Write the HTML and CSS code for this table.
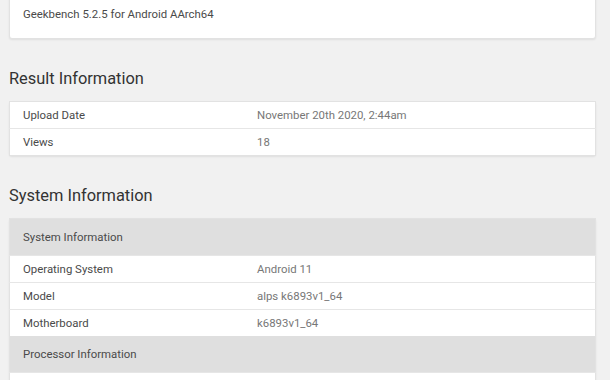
FILE: index.html
```html
<!DOCTYPE html>
<html lang="en">
<head>
<meta charset="UTF-8">
<meta name="viewport" content="width=device-width, initial-scale=1.0">
<title>Geekbench Browser</title>
<link rel="stylesheet" href="styles.css">
</head>
<body>
<div class="page">
  <!-- Benchmark version card -->
  <div class="card version-card">Geekbench 5.2.5 for Android AArch64</div>

  <h2 class="section-title result-title">Result Information</h2>
  <table class="card info-table">
    <tr><td class="name">Upload Date</td><td class="value">November 20th 2020, 2:44am</td></tr>
    <tr><td class="name">Views</td><td class="value">18</td></tr>
  </table>

  <h2 class="section-title system-title">System Information</h2>
  <table class="card info-table">
    <tr class="group"><th colspan="2">System Information</th></tr>
    <tr><td class="name">Operating System</td><td class="value">Android 11</td></tr>
    <tr><td class="name">Model</td><td class="value">alps k6893v1_64</td></tr>
    <tr><td class="name">Motherboard</td><td class="value">k6893v1_64</td></tr>
    <tr class="group"><th colspan="2">Processor Information</th></tr>
    <tr><td class="name"></td><td class="value"></td></tr>
  </table>
</div>
</body>
</html>
```

FILE: styles.css
```css
body {
margin: 0;
background: #f1f1f1;
font-family: Roboto, "Liberation Sans", sans-serif;
color: #4a4a4a;
overflow: hidden;
}

.page {
width: 587px;
margin-left: 9px;
}

.card {
background: #fff;
border: 1px solid #e2e2e2;
border-radius: 3px;
box-shadow: 0 1px 2px rgba(0, 0, 0, 0.08);
}

.version-card {
margin-top: -12px;
padding: 17px 13px 16px;
font-size: 11.4px;
line-height: 16px;
}

.section-title {
margin: 0;
font-weight: 400;
font-size: 16.4px;
line-height: 22px;
color: #333;
}

.result-title {
margin-top: 29px;
margin-bottom: 11px;
}

.system-title {
margin-top: 29px;
margin-bottom: 11px;
}

.info-table {
width: 100%;
border-collapse: collapse;
font-size: 11.4px;
line-height: 16px;
}

.info-table td {
height: 26px;
padding: 0 13px;
border-top: 1px solid #e6e6e6;
}

.info-table tr:first-child td {
border-top: none;
}

.info-table .name {
width: 208px;
}

.info-table .value {
color: #777;
}

.info-table .group th {
height: 36px;
padding: 0 13px;
text-align: left;
font-weight: 400;
background: #dfdfdf;
}
```
